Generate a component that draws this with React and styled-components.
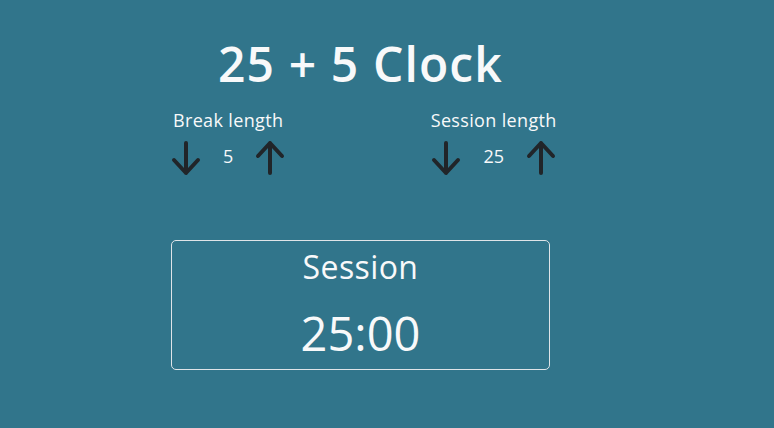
import React from "react";
import styled, { createGlobalStyle } from "styled-components";

const Global = createGlobalStyle`
  html, body { margin: 0; padding: 0; }
  body {
    background: #31758b;
    color: #f8f9fa;
    font-family: "Open Sans", "Noto Sans", sans-serif;
    min-height: 428px;
  }
`;

const Page = styled.main`
  padding: 35px 0 0 171px;
`;

const Wrapper = styled.div`
  width: 379px;
  display: flex;
  flex-direction: column;
`;

const Title = styled.h1`
  margin: 0;
  font-size: 48px;
  font-weight: 600;
  letter-spacing: 1.1px;
  line-height: 57.6px;
  text-align: center;
`;

const Controls = styled.div`
  display: flex;
  justify-content: space-between;
  margin: 14px -7px 0 -1px;
`;

const Control = styled.section`
  display: flex;
  flex-direction: column;
  align-items: center;
`;

const Label = styled.div`
  font-size: 18px;
  letter-spacing: 0.35px;
  line-height: 27px;
`;

const Row = styled.div`
  display: flex;
  align-items: center;
  gap: 21px;
  margin-top: 3px;
`;

const ArrowButton = styled.button`
  border: 0;
  padding: 0;
  background: none;
  color: #212529;
  width: 32px;
  height: 40px;
  display: flex;
  cursor: pointer;
`;

const Value = styled.span`
  font-size: 18px;
  line-height: 27px;
`;

const Display = styled.div`
  margin-top: 63px;
  border: 1px solid #dfe4e8;
  border-radius: 5px;
  padding: 7px 0 7px;
  display: flex;
  flex-direction: column;
  align-items: center;
`;

const TimerLabel = styled.div`
  font-size: 32px;
  letter-spacing: 0.4px;
  line-height: 38px;
`;

const Time = styled.div`
  margin-top: 19px;
  font-size: 47px;
  line-height: 57px;
`;

const Arrow = ({ dir }) => (
  <svg width="32" height="40" viewBox="0 0 32 40" fill="none" stroke="currentColor"
       strokeWidth="4" strokeLinecap="round" strokeLinejoin="round">
    {dir === "down" ? (
      <path d="M16 6 V36 M4 23 L16 36 L28 23" />
    ) : (
      <path d="M16 36 V6 M4 19 L16 6 L28 19" />
    )}
  </svg>
);

const Setter = ({ label, value }) => (
  <Control>
    <Label>{label}</Label>
    <Row>
      <ArrowButton aria-label="decrement"><Arrow dir="down" /></ArrowButton>
      <Value>{value}</Value>
      <ArrowButton aria-label="increment"><Arrow dir="up" /></ArrowButton>
    </Row>
  </Control>
);

export default function App() {
  return (
    <>
      <Global />
      <Page>
        <Wrapper>
          <Title>25 + 5 Clock</Title>
          <Controls>
            <Setter label="Break length" value={5} />
            <Setter label="Session length" value={25} />
          </Controls>
          <Display>
            <TimerLabel>Session</TimerLabel>
            <Time>25:00</Time>
          </Display>
        </Wrapper>
      </Page>
    </>
  );
}
